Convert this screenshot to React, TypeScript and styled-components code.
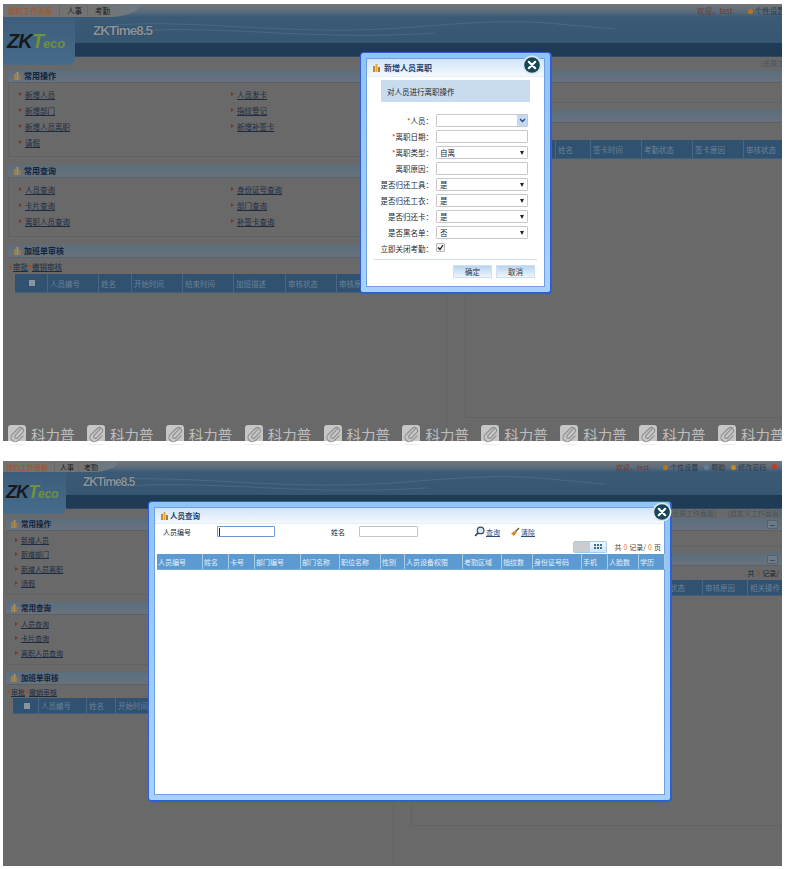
import React from 'react';
import styled, { createGlobalStyle } from 'styled-components';

const GlobalStyle = createGlobalStyle`
  html, body {
    margin: 0;
    padding: 0;
    background: #fff;
  }
  body {
    font-family: "Noto Sans CJK SC", "Liberation Sans", sans-serif;
    font-size: 8px;
  }
`;

const Page = styled.div`
  display: flex;
  flex-direction: column;
  gap: 20px;
  width: 779px;
  padding: 4px 0 0 3px;
`;

const Screen = styled.section<{ $h: number }>`
  position: relative;
  display: flex;
  flex-direction: column;
  width: 779px;
  height: ${p => p.$h}px;
  overflow-x: clip;
  background: #696969;
  color: #1b2a3c;
`;

const TopBar = styled.div<{ $compact?: boolean }>`
  display: flex;
  justify-content: space-between;
  align-items: center;
  height: ${p => (p.$compact ? 11 : 13)}px;
  background: linear-gradient(180deg, #767676 0%, #5a6c7c 60%, #3b5a76 100%);
  overflow: hidden;
  font-size: ${p => (p.$compact ? 7 : 7.5)}px;
`;

const NavTabs = styled.div<{ $compact?: boolean }>`
  display: flex;
  align-items: center;
  gap: ${p => (p.$compact ? 5 : 7)}px;
  height: 100%;
  width: ${p => (p.$compact ? 112 : 132)}px;
  padding-left: ${p => (p.$compact ? 3 : 5)}px;
  background: linear-gradient(90deg, #737373 70%, #6f7b85 100%);
  border-bottom-right-radius: 34px 14px;
`;

const NavItem = styled.span<{ $active?: boolean; $compact?: boolean }>`
  padding-right: ${p => (p.$active ? 6 : p.$compact ? 4 : 5)}px;
  border-right: 1px solid #686868;
  color: ${p => (p.$active ? '#a8521e' : '#1c1c1c')};
  white-space: nowrap;

  &:last-child {
    border-right: 0;
  }
`;

const UserMenu = styled.div<{ $compact?: boolean }>`
  display: flex;
  flex-shrink: 0;
  align-items: center;
  gap: ${p => (p.$compact ? 6 : 7)}px;
  margin-right: ${p => (p.$compact ? 0 : -100)}px;
  width: ${p => (p.$compact ? 166 : 185)}px;
  color: #2a3a48;
  white-space: nowrap;
`;

const Welcome = styled.span`
  margin-right: 6px;
  color: #713a2e;
`;

const MenuDot = styled.i<{ $color: string }>`
  display: inline-block;
  width: 5px;
  height: 5px;
  margin-right: 2px;
  border-radius: 50%;
  background: ${p => p.$color};
`;

const Header = styled.header`
  display: flex;
`;

const LogoPanel = styled.div<{ $compact?: boolean }>`
  display: flex;
  flex-shrink: 0;
  align-items: center;
  width: ${p => (p.$compact ? 63 : 72)}px;
  height: ${p => (p.$compact ? 42 : 48)}px;
  padding: ${p => (p.$compact ? '0 0 2px 3px' : '0 0 0 4px')};
  box-sizing: border-box;
  background: linear-gradient(180deg, #3d5e7b 0%, #466b8b 100%);
  border-bottom-right-radius: 7px;
`;

const Logo = styled.div<{ $compact?: boolean }>`
  font-family: "Liberation Sans", sans-serif;
  font-size: ${p => (p.$compact ? 18 : 20)}px;
  font-style: italic;
  font-weight: 700;
  letter-spacing: -1px;
  color: #17191c;

  b {
    color: #73903c;
  }

  small {
    font-size: ${p => (p.$compact ? 12 : 13)}px;
    letter-spacing: 0;
    color: #6f8f3f;
  }
`;

const BandColumn = styled.div`
  display: flex;
  flex: 1;
  flex-direction: column;
  min-width: 0;
`;

const BrandRow = styled.div<{ $compact?: boolean }>`
  position: relative;
  display: flex;
  align-items: flex-start;
  height: ${p => (p.$compact ? 23 : 26)}px;
  padding-left: ${p => (p.$compact ? 17 : 18)}px;
  background: linear-gradient(180deg, #3b5a76 0%, #375672 100%);
  overflow: hidden;
`;

const BrandName = styled.div<{ $compact?: boolean }>`
  position: relative;
  margin-top: ${p => (p.$compact ? 3 : 6)}px;
  font-family: "Liberation Sans", sans-serif;
  font-size: ${p => (p.$compact ? 12 : 13.5)}px;
  font-weight: 700;
  letter-spacing: -1px;
  color: #8a949c;
  text-shadow: 0 0 1px #1a2a38;
  white-space: nowrap;
`;

const Swoosh = styled.svg`
  position: absolute;
  left: 40px;
  top: 0;
`;

const DarkBar = styled.div`
  height: 14px;
  background: #1f3b55;
  border-bottom: 1px solid #2d4a66;
  box-sizing: border-box;
`;

const RestoreRow = styled.div<{ $compact?: boolean }>`
  display: flex;
  justify-content: flex-end;
  gap: 11px;
  height: ${p => (p.$compact ? 5 : 8)}px;
  margin-right: ${p => (p.$compact ? 1 : -90)}px;
  color: #46535f;
  font-size: 7px;
  line-height: ${p => (p.$compact ? 8 : 12)}px;
  white-space: nowrap;
`;

const Body = styled.div`
  display: flex;
  flex: 1;
  min-height: 0;
  overflow: hidden;
`;

const LeftColumn = styled.div<{ $compact?: boolean }>`
  display: flex;
  flex-direction: column;
  flex-shrink: 0;
  box-sizing: border-box;
  width: ${p => (p.$compact ? 390 : 443)}px;
  padding: ${p => (p.$compact ? '4px 3px 0 3px' : '5px 3px 0 5px')};
  gap: ${p => (p.$compact ? 7 : 8)}px;
`;

const Panel = styled.div`
  display: flex;
  flex-direction: column;
`;

const PanelTitle = styled.div<{ $compact?: boolean; $mt?: number }>`
  position: relative;
  display: flex;
  align-items: center;
  flex-shrink: 0;
  gap: 3px;
  height: 13px;
  margin-top: ${p => p.$mt ?? 0}px;
  padding: 0 0 1px ${p => (p.$compact ? 5 : 6)}px;
  background: linear-gradient(180deg, #5b6d7e 0%, #68727c 100%);
  border-bottom: 1px solid #5c6167;
  box-sizing: border-box;
  color: #13233a;
  font-size: ${p => (p.$compact ? 7.5 : 8)}px;
  font-weight: 700;
`;

const CollapseButton = styled.span`
  position: absolute;
  right: 4px;
  top: 2px;
  width: 9px;
  height: 7px;
  border: 1px solid #57626c;
  background: #6e7a85;
  color: #24303c;
  font-size: 6px;
  line-height: 7px;
  text-align: center;
`;

const FolderIcon = styled.svg<{ $dim?: boolean }>`
  flex-shrink: 0;
  opacity: ${p => (p.$dim ? 0.6 : 1)};
`;

const PanelBody = styled.div<{ $h: number }>`
  height: ${p => p.$h}px;
  box-sizing: border-box;
  border: 1px solid #5f6266;
  border-top: 0;
`;

const LinkGrid = styled.ul<{ $compact?: boolean }>`
  display: grid;
  grid-template-columns: ${p => (p.$compact ? '190px' : '212px 212px')};
  grid-auto-rows: ${p => (p.$compact ? 14.3 : 16)}px;
  margin: 0;
  padding: ${p => (p.$compact ? '2px 0 0 8px' : '3px 0 0 10px')};
  list-style: none;
  font-size: ${p => (p.$compact ? 7 : 7.5)}px;
`;

const LinkItem = styled.li`
  display: flex;
  align-items: center;
  gap: 3px;

  &::before {
    content: "";
    width: 0;
    height: 0;
    border-left: 3px solid #8a2f1c;
    border-top: 2px solid transparent;
    border-bottom: 2px solid transparent;
  }

  span {
    color: #1c2c44;
    text-decoration: underline;
  }
`;

const AuditRow = styled.div<{ $compact?: boolean }>`
  display: flex;
  align-items: center;
  height: ${p => (p.$compact ? 13 : 16)}px;
  padding-left: 1px;
  font-size: ${p => (p.$compact ? 7 : 7.5)}px;

  span {
    color: #1c2c44;
    text-decoration: underline;
  }

  i {
    width: 3px;
    height: 3px;
    margin: 0 1px 0 0;
    border-radius: 50%;
    background: #b04a1c;
  }
`;

const DarkHead = styled.div<{ $h: number; $indent?: number }>`
  display: flex;
  flex-shrink: 0;
  height: ${p => p.$h}px;
  margin-left: ${p => p.$indent ?? 0}px;
  background: #30516f;
  border-bottom: 1px solid #3f5f7c;
  box-sizing: border-box;
  color: #6a8299;
  font-size: 7.5px;
`;

const DarkCell = styled.div<{ $w: number }>`
  display: flex;
  flex-shrink: 0;
  align-items: center;
  width: ${p => p.$w}px;
  padding-left: 2px;
  box-sizing: border-box;
  border-right: 1px solid #496784;
  white-space: nowrap;
`;

const CheckCell = styled(DarkCell)`
  justify-content: center;

  i {
    width: 6px;
    height: 6px;
    background: #8a949c;
  }
`;

const RightColumn = styled.div<{ $compact?: boolean }>`
  display: flex;
  flex: 1;
  flex-direction: column;
  min-width: 0;
  border-left: 1px solid #5f6266;
  padding: ${p => (p.$compact ? '4px 0 0 0' : '5px 0 0 4px')};
`;

const RightBox = styled.div<{ $compact?: boolean; $bottom: number }>`
  display: flex;
  flex: 1;
  flex-direction: column;
  margin: 0 0 ${p => p.$bottom}px ${p => (p.$compact ? 17 : 14)}px;
  border-left: 1px solid #5f6266;
  border-bottom: 1px solid #5f6266;
`;

const RightBody = styled.div<{ $h: number }>`
  height: ${p => p.$h}px;
  flex-shrink: 0;
  border-bottom: 1px solid #5f6266;
  box-sizing: border-box;
`;

const RightPager = styled.div<{ $h: number }>`
  display: flex;
  justify-content: flex-end;
  align-items: center;
  height: ${p => p.$h}px;
  flex-shrink: 0;
  margin-right: -12px;
  font-size: 7px;
  color: #20262d;
  white-space: nowrap;

  em {
    margin: 0 2px;
    font-style: normal;
    color: #a33c1c;
  }
`;

const Modal = styled.div<{ $left: number; $top: number; $w: number; $h: number }>`
  position: absolute;
  left: ${p => p.$left}px;
  top: ${p => p.$top}px;
  width: ${p => p.$w}px;
  height: ${p => p.$h}px;
  box-sizing: border-box;
  padding: 5px;
  background: linear-gradient(180deg, #8ec4f6 0%, #a8d2fa 100%);
  border: 1px solid #2f5fd6;
  border-right-width: 2px;
  border-bottom-width: 2px;
  border-radius: 4px;
  z-index: 2;
`;

const ModalInner = styled.div`
  display: flex;
  flex-direction: column;
  height: 100%;
  box-sizing: border-box;
  background: #fff;
  border: 1px solid #6f9fe0;
  color: #23262b;
`;

const ModalTitle = styled.div<{ $h: number; $gap: number; $size: number }>`
  display: flex;
  align-items: center;
  flex-shrink: 0;
  gap: ${p => p.$gap}px;
  height: ${p => p.$h}px;
  padding-left: 6px;
  background: linear-gradient(180deg, #cfe4fa 0%, #f4f9fe 100%);
  border-bottom: 1px solid #e4eef8;
  box-sizing: border-box;
  color: #1d3f70;
  font-size: ${p => p.$size}px;
  font-weight: 700;
`;

const CloseButton = styled.svg<{ $right: number; $top: number }>`
  position: absolute;
  right: ${p => p.$right}px;
  top: ${p => p.$top}px;
`;

const Banner = styled.div`
  display: flex;
  align-items: center;
  flex-shrink: 0;
  height: 22px;
  margin: 3px 14px 12px 14px;
  padding-left: 6px;
  background: #c9dbee;
  font-size: 7.5px;
`;

const FormGrid = styled.div`
  display: grid;
  grid-template-columns: 66px 92px;
  grid-auto-rows: 13px;
  row-gap: 3px;
  column-gap: 3px;
  font-size: 7.5px;
`;

const FieldLabel = styled.label`
  display: flex;
  justify-content: flex-end;
  align-items: center;
  white-space: nowrap;

  em {
    font-style: normal;
    color: #e02020;
  }
`;

const FieldBox = styled.div`
  display: flex;
  justify-content: space-between;
  align-items: center;
  box-sizing: border-box;
  padding: 0 3px;
  background: #fff;
  border: 1px solid #c6c9cc;
  border-radius: 1px;
  font-size: 7.5px;
`;

const ComboButton = styled.span`
  display: flex;
  justify-content: center;
  align-items: center;
  width: 10px;
  height: 11px;
  margin-right: -3px;
  background: #c5d8f4;
`;

const Caret = styled.span`
  width: 0;
  height: 0;
  border-left: 2.5px solid transparent;
  border-right: 2.5px solid transparent;
  border-top: 4px solid #222;
`;

const CheckMark = styled.span`
  display: flex;
  justify-content: center;
  align-items: center;
  width: 7px;
  height: 7px;
  margin-top: 1px;
  border: 1px solid #b8b8b8;
  border-radius: 1px;
  background: #f4f4f4;
`;

const ModalFooter = styled.div`
  display: flex;
  justify-content: flex-end;
  gap: 4px;
  margin: 4px 7px 0 7px;
  padding: 5px 2px 0 0;
  border-top: 1px solid #d3dfea;
`;

const FooterButton = styled.button`
  width: 39px;
  height: 13px;
  padding: 0;
  background: linear-gradient(180deg, #b9d4ee 0%, #eef5fc 100%);
  border: 1px solid #cfe0f0;
  color: #30343a;
  font-family: inherit;
  font-size: 7.5px;
`;

const SearchRow = styled.div`
  display: flex;
  align-items: center;
  flex-shrink: 0;
  height: 15px;
  padding-left: 8px;
  font-size: 7px;
`;

const SearchLabel = styled.span<{ $w: number; $ml?: number }>`
  width: ${p => p.$w}px;
  margin-left: ${p => p.$ml ?? 0}px;
`;

const SearchInput = styled.div<{ $w: number; $focus?: boolean }>`
  display: flex;
  align-items: center;
  width: ${p => p.$w}px;
  height: 11px;
  box-sizing: border-box;
  border: 1px solid ${p => (p.$focus ? '#6d96d0' : '#c3c6c9')};
  border-radius: 1px;

  i {
    display: ${p => (p.$focus ? 'block' : 'none')};
    width: 1px;
    height: 8px;
    margin-left: 1px;
    background: #222;
  }
`;

const ToolLink = styled.span<{ $ml: number }>`
  display: flex;
  align-items: center;
  gap: 1px;
  margin-left: ${p => p.$ml}px;
  color: #2a4a80;
  text-decoration: underline;
`;

const PagerRow = styled.div`
  display: flex;
  justify-content: flex-end;
  align-items: center;
  flex-shrink: 0;
  gap: 7px;
  height: 15px;
  padding-right: 3px;
  font-size: 7px;
  color: #3a4048;

  em {
    margin: 0 2px;
    font-style: normal;
    color: #ef7b3a;
  }
`;

const ViewToggle = styled.div`
  display: flex;
  width: 34px;
  height: 12px;
  border-radius: 2px;
  overflow: hidden;
  border: 1px solid #a9c8e6;
  box-sizing: border-box;
`;

const ViewPart = styled.span<{ $on?: boolean }>`
  display: flex;
  flex: 1;
  justify-content: center;
  align-items: center;
  background: ${p => (p.$on ? 'linear-gradient(180deg,#f2f8fe,#cfe4f8)' : '#c9ccd0')};
`;

const ResultHead = styled.div`
  display: flex;
  flex-shrink: 0;
  height: 16px;
  margin-left: 2px;
  background: #5c9bd2;
  border-bottom: 1px solid #79aedb;
  box-sizing: border-box;
  color: #e4eef8;
  font-size: 7px;
`;

const ResultCell = styled.div<{ $w: number }>`
  display: flex;
  flex-shrink: 0;
  align-items: center;
  width: ${p => p.$w}px;
  padding-left: 1px;
  box-sizing: border-box;
  border-right: 1px solid #a8cbe8;
  white-space: nowrap;
`;

const WatermarkRow = styled.div`
  position: absolute;
  left: 5px;
  top: 421px;
  display: flex;
  width: 774px;
  height: 22px;
  overflow: hidden;
  z-index: 3;
`;

const WatermarkTile = styled.div`
  display: flex;
  flex-shrink: 0;
  align-items: flex-start;
  gap: 5px;
  width: 78.9px;
`;

const WatermarkBadge = styled.span`
  display: flex;
  justify-content: center;
  align-items: center;
  width: 18px;
  height: 19px;
  border-radius: 3px;
  background: rgba(255, 255, 255, 0.62);
  box-shadow: 0 1px 1px rgba(0, 0, 0, 0.08);
`;

const WatermarkText = styled.span`
  color: rgba(255, 255, 255, 0.58);
  font-size: 14.5px;
  line-height: 19px;
  white-space: nowrap;
`;

const Folder = ({ dim }: { dim?: boolean }) => (
  <FolderIcon $dim={dim} width="7" height="8" viewBox="0 0 7 8">
    <rect x="0" y="2" width="2" height="6" fill="#c98a2e" />
    <rect x="2.5" y="0" width="2" height="8" fill="#e3a63c" />
    <rect x="5" y="3" width="2" height="5" fill="#b9772a" />
  </FolderIcon>
);

const Close = ({ right, top }: { right: number; top: number }) => (
  <CloseButton $right={right} $top={top} width="20" height="20" viewBox="0 0 20 20">
    <circle cx="10" cy="10" r="9.5" fill="#dfe8ee" />
    <circle cx="10" cy="10" r="7.8" fill="#174656" />
    <path d="M6.8 6.8 13.2 13.2M13.2 6.8 6.8 13.2" stroke="#fff" strokeWidth="2.2" strokeLinecap="round" />
  </CloseButton>
);

const Clip = () => (
  <svg width="16" height="17" viewBox="0 0 18 19" fill="none" stroke="#8f8f8f" strokeWidth="1.3" strokeLinecap="round">
    <path d="M14 3 7 10.5a1.9 1.9 0 0 0 2.8 2.7L15.6 7a3.3 3.3 0 0 0-4.8-4.5L3.7 9.4a4.8 4.8 0 0 0 6.9 6.8L16 11" />
  </svg>
);

const Watermark = () => (
  <WatermarkRow>
    {Array.from({ length: 10 }, (_, i) => (
      <WatermarkTile key={i}>
        <WatermarkBadge>
          <Clip />
        </WatermarkBadge>
        <WatermarkText>科力普</WatermarkText>
      </WatermarkTile>
    ))}
  </WatermarkRow>
);

const operateLinks = ['新增人员', '人员发卡', '新增部门', '指纹登记', '新增人员离职', '新增补签卡', '请假'];
const queryLinks = ['人员查询', '身份证号查询', '卡片查询', '部门查询', '离职人员查询', '补签卡查询'];

// the second shot only shows the first column, the dialog covers the rest
const LinkList = ({ items, compact }: { items: string[]; compact?: boolean }) => (
  <LinkGrid $compact={compact}>
    {items
      .filter((_, i) => !compact || i % 2 === 0)
      .map(t => (
        <LinkItem key={t}>
          <span>{t}</span>
        </LinkItem>
      ))}
  </LinkGrid>
);

const auditCols: [string, number, number][] = [
  ['人员编号', 51, 48],
  ['姓名', 33, 29],
  ['开始时间', 51, 44],
  ['结束时间', 51, 44],
  ['加班描述', 52, 44],
  ['审核状态', 51, 44],
  ['审核原因', 51, 44],
];

const signCols: [string, number, number][] = [
  ['人员编号', 50, 50],
  ['姓名', 35, 50],
  ['签卡时间', 51, 50],
  ['考勤状态', 51, 51],
  ['签卡原因', 51, 0],
  ['审核状态', 51, 50],
  ['审核原因', 0, 45],
  ['相关操作', 0, 40],
];

const Shell = ({ compact, children, height }: { compact?: boolean; children: React.ReactNode; height: number }) => (
  <Screen $h={height}>
    <TopBar $compact={compact}>
      <NavTabs $compact={compact}>
        <NavItem $active>我的工作面板</NavItem>
        <NavItem $compact={compact}>人事</NavItem>
        <NavItem $compact={compact}>考勤</NavItem>
      </NavTabs>
      <UserMenu $compact={compact}>
        <Welcome>欢迎，test.</Welcome>
        <span><MenuDot $color="#b8761c" />个性设置</span>
        <span><MenuDot $color="#5f7f9a" />帮助</span>
        <span><MenuDot $color="#c08a20" />修改密码</span>
        <MenuDot $color="#c23a22" />
      </UserMenu>
    </TopBar>
    <Header>
      <LogoPanel $compact={compact}>
        <Logo $compact={compact}>ZK<b>T</b><small>eco</small></Logo>
      </LogoPanel>
      <BandColumn>
        <BrandRow $compact={compact}>
          <Swoosh width="500" height="26" viewBox="0 0 500 26" fill="none" stroke="#6f8ca6" strokeOpacity="0.3">
            <path d="M0 8C90 2 180 20 300 10S420 6 500 12" />
            <path d="M20 14C110 8 200 24 320 16" />
          </Swoosh>
          <BrandName $compact={compact}>ZKTime8.5</BrandName>
        </BrandRow>
        <DarkBar />
        <RestoreRow $compact={compact}>
          <span>[还原工作面板]</span>
          <span>[自定义工作面板]</span>
        </RestoreRow>
      </BandColumn>
    </Header>
    <Body>
      <LeftColumn $compact={compact}>
        <Panel>
          <PanelTitle $compact={compact}><Folder dim />常用操作</PanelTitle>
          <PanelBody $h={compact ? 64 : 74}><LinkList items={operateLinks} compact={compact} /></PanelBody>
        </Panel>
        <Panel>
          <PanelTitle $compact={compact}><Folder dim />常用查询</PanelTitle>
          <PanelBody $h={compact ? 50 : 59}><LinkList items={queryLinks} compact={compact} /></PanelBody>
        </Panel>
        <Panel>
          <PanelTitle $compact={compact}><Folder dim />加班单审核</PanelTitle>
          <AuditRow $compact={compact}>
            <i /><span>审批</span><i /><span>撤销审核</span>
          </AuditRow>
          <DarkHead $h={compact ? 16 : 19} $indent={7}>
            <CheckCell $w={compact ? 26 : 33}><i /></CheckCell>
            {auditCols.map(([t, w, cw]) => (
              <DarkCell key={t} $w={compact ? cw : w}>{t}</DarkCell>
            ))}
          </DarkHead>
        </Panel>
      </LeftColumn>
      <RightColumn $compact={compact}>
        <PanelTitle $compact={compact}>{compact && <CollapseButton>—</CollapseButton>}</PanelTitle>
        <RightBody $h={compact ? 16 : 20} />
        <PanelTitle $compact={compact} $mt={compact ? 6 : 7}>
          {compact && <CollapseButton>—</CollapseButton>}
        </PanelTitle>
        <RightPager $h={compact ? 14 : 17}>
          {compact && <>共<em>0</em>记录/<em>0</em>页</>}
        </RightPager>
        <RightBox $compact={compact} $bottom={compact ? 40 : 23}>
          <DarkHead $h={compact ? 16 : 19}>
            <CheckCell $w={40}><i /></CheckCell>
            {signCols
              .filter(([, w, cw]) => (compact ? cw : w) > 0)
              .map(([t, w, cw]) => (
                <DarkCell key={t} $w={compact ? cw : w}>{t}</DarkCell>
              ))}
          </DarkHead>
        </RightBox>
      </RightColumn>
    </Body>
    {children}
  </Screen>
);

const resultCols: [string, number][] = [
  ['人员编号', 46],
  ['姓名', 26],
  ['卡号', 26],
  ['部门编号', 46],
  ['部门名称', 39],
  ['职位名称', 41],
  ['性别', 24],
  ['人员设备权限', 58],
  ['考勤区域', 39],
  ['指纹数', 31],
  ['身份证号码', 49],
  ['手机', 26],
  ['人脸数', 31],
  ['学历', 26],
];

const formFields: { label: string; required?: boolean; value?: string; kind: 'combo' | 'text' | 'select' }[] = [
  { label: '人员：', required: true, kind: 'combo' },
  { label: '离职日期：', required: true, kind: 'text' },
  { label: '离职类型：', required: true, kind: 'select', value: '自离' },
  { label: '离职原因：', kind: 'text' },
  { label: '是否归还工具：', kind: 'select', value: '是' },
  { label: '是否归还工衣：', kind: 'select', value: '是' },
  { label: '是否归还卡：', kind: 'select', value: '是' },
  { label: '是否黑名单：', kind: 'select', value: '否' },
];

const LeaveDialog = () => (
  <Modal $left={357} $top={48} $w={192} $h={242}>
    <ModalInner>
      <ModalTitle $h={18} $gap={4} $size={8}><Folder />新增人员离职</ModalTitle>
      <Banner>对人员进行离职操作</Banner>
      <FormGrid>
        {formFields.map(f => (
          <React.Fragment key={f.label}>
            <FieldLabel>{f.required && <em>*</em>}{f.label}</FieldLabel>
            <FieldBox>
              <span>{f.value}</span>
              {f.kind === 'select' && <Caret />}
              {f.kind === 'combo' && (
                <ComboButton>
                  <svg width="7" height="5" viewBox="0 0 7 5" fill="none" stroke="#2b4a80" strokeWidth="1.4">
                    <path d="M1 1 3.5 3.5 6 1" />
                  </svg>
                </ComboButton>
              )}
            </FieldBox>
          </React.Fragment>
        ))}
        <FieldLabel>立即关闭考勤：</FieldLabel>
        <div>
          <CheckMark>
            <svg width="7" height="7" viewBox="0 0 7 7" fill="none" stroke="#222" strokeWidth="1.3">
              <path d="M1 3.5 3 5.5 6 1" />
            </svg>
          </CheckMark>
        </div>
      </FormGrid>
      <ModalFooter>
        <FooterButton>确定</FooterButton>
        <FooterButton>取消</FooterButton>
      </ModalFooter>
    </ModalInner>
    <Close right={8} top={2} />
  </Modal>
);

const SearchDialog = () => (
  <Modal $left={145} $top={40} $w={524} $h={301}>
    <ModalInner>
      <ModalTitle $h={16} $gap={2} $size={7.5}><Folder />人员查询</ModalTitle>
      <SearchRow>
        <SearchLabel $w={54}>人员编号</SearchLabel>
        <SearchInput $w={58} $focus><i /></SearchInput>
        <SearchLabel $w={28} $ml={56}>姓名</SearchLabel>
        <SearchInput $w={59} />
        <ToolLink $ml={56}>
          <svg width="11" height="11" viewBox="0 0 10 10" fill="none" stroke="#3a4a5a" strokeWidth="1.1">
            <circle cx="6" cy="4" r="3" fill="#dbe9f5" />
            <path d="M3.8 6.2 1 9" strokeWidth="1.6" />
          </svg>
          查询
        </ToolLink>
        <ToolLink $ml={10}>
          <svg width="10" height="10" viewBox="0 0 10 10">
            <path d="M9 1 5.5 4.5" stroke="#6a4a20" strokeWidth="1.2" />
            <path d="M5.5 3.5 7 5 4 9 1 6.5Z" fill="#d08a20" />
          </svg>
          清除
        </ToolLink>
      </SearchRow>
      <PagerRow>
        <ViewToggle>
          <ViewPart />
          <ViewPart $on>
            <svg width="9" height="5" viewBox="0 0 9 5" fill="#3a6a9a">
              <path d="M0 0h2v2H0zM3 0h2v2H3zM6 0h2v2H6zM0 3h2v2H0zM3 3h2v2H3zM6 3h2v2H6z" />
            </svg>
          </ViewPart>
        </ViewToggle>
        <span>共<em>0</em>记录/<em>0</em>页</span>
      </PagerRow>
      <ResultHead>
        {resultCols.map(([t, w]) => (
          <ResultCell key={t} $w={w}>{t}</ResultCell>
        ))}
      </ResultHead>
    </ModalInner>
    <Close right={-2} top={0} />
  </Modal>
);

export default function App() {
  return (
    <Page>
      <GlobalStyle />
      <Shell height={437}>
        <LeaveDialog />
        <Watermark />
      </Shell>
      <Shell compact height={405}>
        <SearchDialog />
      </Shell>
    </Page>
  );
}
